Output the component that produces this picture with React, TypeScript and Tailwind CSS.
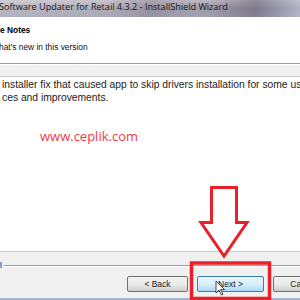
import React from 'react';

const Btn: React.FC<{ label: string; hot?: boolean; className?: string }> = ({ label, hot, className }) => (
  <div
    className={`h-[16px] rounded-[2px] border flex items-center justify-center text-[8.5px] leading-none text-[#1b1b1b] shrink-0 ${
      hot
        ? 'border-[#3c7fb1] bg-gradient-to-b from-[#eaf6fd] via-[#d9f0fc] to-[#a7d9f5]'
        : 'border-[#707070] bg-gradient-to-b from-[#f2f2f2] via-[#ebebeb] to-[#cfcfcf]'
    } ${className ?? ''}`}
  >
    {label}
  </div>
);

const App: React.FC = () => {
  return (
    <div className="relative w-[300px] h-[300px] overflow-hidden bg-[#f0f0f0] font-['Liberation_Sans',Arial,sans-serif]">
      {/* Title bar */}
      <div className="h-[17px] flex items-start pt-[1px] bg-gradient-to-r from-[#bcb8c0] via-[#aaa5b0] to-[#8d899a] relative overflow-hidden">
        <div className="absolute inset-0 bg-gradient-to-b from-white/30 via-transparent to-[#9aa9c4]/40" />
        <div className="absolute left-[110px] top-0 w-[80px] h-full bg-gradient-to-r from-transparent via-[#6d6478]/30 to-transparent" />
        <div className="absolute right-0 top-0 w-[90px] h-full bg-gradient-to-r from-transparent via-[#5b5468]/40 to-[#c9cde0]/60" />
        <span className="relative -ml-[1px] text-[9.1px] leading-[12px] text-[#161616] whitespace-nowrap font-['Open_Sans',sans-serif]">
          Software Updater for Retail 4.3.2 - InstallShield Wizard
        </span>
      </div>

      {/* Header */}
      <div className="h-[47px] bg-white border-b border-[#a0a0a0] flex flex-col pt-[7px]">
        <div className="h-[12px] text-[8.4px] font-bold text-black whitespace-nowrap leading-[12px]">e Notes</div>
        <div className="h-[12px] text-[8.4px] text-[#111] whitespace-nowrap leading-[12px] mt-[5px] -ml-[1px]">hat's new in this version</div>
      </div>

      {/* Body */}
      <div className="h-[12px] border-t border-white" />
      <div className="h-[176px] bg-white border-t border-b border-[#c8c8c8] flex flex-col pt-[1px] overflow-hidden">
        <div className="pl-[2px] text-[10.3px] leading-[13px] text-[#222] whitespace-nowrap">
          installer fix that caused app to skip drivers installation for some us
        </div>
        <div className="pl-[2px] text-[10.3px] leading-[13px] text-[#222] whitespace-nowrap">ces and improvements.</div>
        <div className="pl-[40px] mt-[24px] text-[13px] leading-[16px] text-[#f03a48] font-['Open_Sans',sans-serif]">www.ceplik.com</div>
      </div>

      {/* Footer */}
      <div className="flex items-start pt-[10px]">
        <div className="w-[2px] h-[6px] bg-[#7f9fcf]" />
        <div className="flex-1 ml-[2px] mt-[3px] border-t border-[#a0a0a0] border-b border-b-white h-[2px]" />
      </div>
      <div className="flex pt-[8px] pl-[127px] gap-[9px]">
        <Btn label="< Back" className="w-[61px]" />
        <Btn label="Next >" hot className="w-[67px]" />
        <Btn label="Cancel" className="w-[61px]" />
      </div>
      <div className="absolute left-0 right-0 bottom-0 h-[2px] bg-[#9fb6d0]" />

      {/* Annotation: arrow, highlight box and cursor */}
      <svg className="absolute left-0 top-0" width="300" height="300" viewBox="0 0 300 300">
        <path
          d="M211.5 187.5 H236.5 V222.5 H247 L224 256 L201 222.5 H211.5 Z"
          fill="white"
          stroke="#e8202a"
          strokeWidth="3"
          strokeLinejoin="miter"
        />
        <rect x="191.5" y="263" width="78" height="35.5" fill="none" stroke="#e8202a" strokeWidth="3.5" />
        <path d="M216 281 L216 293 L219 290 L221.5 295 L223 294.3 L220.6 289.5 L224.5 289.5 Z" fill="white" stroke="#222" strokeWidth="0.8" />
      </svg>
    </div>
  );
};

export default App;
